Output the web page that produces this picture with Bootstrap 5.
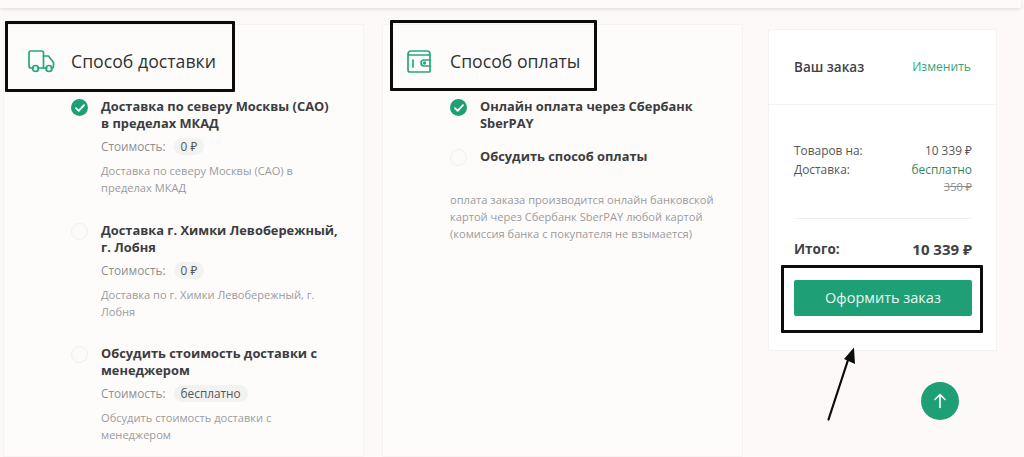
<!doctype html>
<html lang="ru"><head><meta charset="utf-8"><title>Оформление заказа</title>
<link href="https://cdn.jsdelivr.net/npm/bootstrap@5.3.0/dist/css/bootstrap.min.css" rel="stylesheet">
<style>
html,body{height:457px;overflow:hidden}
body{background:#fdf9f8;font-family:"Open Sans","Noto Sans",sans-serif;color:#3b3d40;position:relative}
.topstrip{height:8px;box-shadow:0 1px 4px rgba(0,0,0,.13);margin:0 3px 0 0;background:#fefafa}
.board{padding:16px 26px 0 3px;gap:18px}
.panel{width:361px;height:433px;background:#fefcfb;border:1px solid #f6f3f2;flex:none}
.panel-head{height:73px;padding-left:24px;gap:16px}
.panel-head.pay{padding-left:24px;gap:18px}
.panel-title{font-size:17.7px;font-weight:500;color:#303236;margin:0}
.choices{padding-left:67px;padding-right:24px}
.choice{gap:13px;margin-bottom:25px}
.choice.roomy{margin-bottom:26px}
.choice.tight{margin-bottom:16px}
.tick{width:17px;height:17px;border-radius:50%;flex:none;background:#1e9f76;display:flex;align-items:center;justify-content:center;margin-top:1px}
.tick.off{background:#fcfbfa;border:1px solid #f1efee}
.choice-name{font-size:12.85px;font-weight:700;line-height:17px;color:#3b3d40}
.cost{font-size:11.8px;color:#8d8f92;line-height:17px;margin-top:6px;gap:8px}
.pill{background:#f2f2f1;border-radius:9px;padding:0 7px;color:#55575a;line-height:17px}
.desc{font-size:11.1px;line-height:17px;color:#9a9b9d;margin-top:7px}
.paynote{font-size:11.1px;line-height:17px;color:#9a9b9d;margin:4px 0 0 0}
.summary{width:229px;height:322px;background:#fff;border:1px solid #f5f2f1;margin:5px 0 0 7px;flex:none}
.sum-head{height:75px;padding:1px 25px 0;border-bottom:1px solid #f5f2f1}
.sum-title{font-size:13.5px;font-weight:600;color:#3f4144}
.sum-edit{font-size:12.1px;color:#34a582;text-decoration:none}
.sum-body{padding:36px 24px 0 25px;font-size:11.9px;line-height:19px;color:#55575a}
.free{color:#2f8a5f}
.old{font-size:11px;line-height:15px;color:#8d8f92;text-decoration:line-through;text-align:right}
.rule{height:1px;background:#f0eeee;margin:24px 0 20px}
.total{font-size:15px;font-weight:700;line-height:20px;color:#3f4144}
.total span:first-child{font-size:13.500px}
.order-btn{display:block;width:100%;height:36px;margin-top:21px;background:#1e9f76;border:0;border-radius:2px;color:#eaf7f2;font-size:14.5px;padding:0}
.order-btn:hover{background:#1e9f76;color:#eaf7f2}
.callout{position:absolute;border:3px solid #0c0c0c;border-radius:1px;pointer-events:none}
.c1{left:5px;top:21px;width:230px;height:71px}
.c2{left:390px;top:20px;width:207px;height:71px}
.c3{left:781px;top:265px;width:202px;height:68px}
.arrow{position:absolute;left:820px;top:340px;pointer-events:none}
.to-top{position:absolute;left:921px;top:382px;width:38px;height:38px;border-radius:50%;background:#1e9f76;border:0;padding:0;display:flex;align-items:center;justify-content:center}
</style></head>
<body>
<div class="topstrip"></div>
<div class="board d-flex align-items-start">
  <section class="panel">
    <div class="panel-head d-flex align-items-center">
      <svg width="27" height="23" viewBox="0 0 27 23" fill="none" stroke="#27a67e" stroke-width="1.7" stroke-linecap="round" stroke-linejoin="round"><path d="M5.5 18H3A2 2 0 0 1 1 16V3A2 2 0 0 1 3 1H13.5A2 2 0 0 1 15.5 3V18H9.5"/><path d="M15.5 6H20.500L25.500 12.500V16.500A1.500 1.500 0 0 1 24 18H23M19 18H15.500"/><circle cx="7.5" cy="18.500" r="3"/><circle cx="21" cy="18.500" r="3"/></svg>
      <h2 class="panel-title">Способ доставки</h2>
    </div>
    <div class="choices">
      <div class="choice roomy d-flex">
        <span class="tick"><svg width="10" height="8" viewBox="0 0 10 8" fill="none" stroke="#fff" stroke-width="1.8" stroke-linecap="round" stroke-linejoin="round"><path d="M1 4.200 3.700 6.800 9 1.200"/></svg></span>
        <div><div class="choice-name">Доставка по северу Москвы (САО) в пределах МКАД</div>
        <div class="cost d-flex"><span>Стоимость:</span><span class="pill">0 ₽</span></div>
        <div class="desc">Доставка по северу Москвы (САО) в пределах МКАД</div></div>
      </div>
      <div class="choice d-flex">
        <span class="tick off"></span>
        <div><div class="choice-name">Доставка г. Химки Левобережный, г. Лобня</div>
        <div class="cost d-flex"><span>Стоимость:</span><span class="pill">0 ₽</span></div>
        <div class="desc">Доставка по г. Химки Левобережный, г. Лобня</div></div>
      </div>
      <div class="choice d-flex">
        <span class="tick off"></span>
        <div><div class="choice-name">Обсудить стоимость доставки с менеджером</div>
        <div class="cost d-flex"><span>Стоимость:</span><span class="pill">бесплатно</span></div>
        <div class="desc">Обсудить стоимость доставки с менеджером</div></div>
      </div>
    </div>
  </section>
  <section class="panel">
    <div class="panel-head pay d-flex align-items-center">
      <svg width="25" height="23" viewBox="0 0 25 23" fill="none" stroke="#27a67e" stroke-width="1.7" stroke-linecap="round" stroke-linejoin="round"><path d="M1 4A3 3 0 0 1 4 1H20A3 3 0 0 1 23 4V5H3A2 2 0 0 1 1 3.500V20A2 2 0 0 0 3 22H22A1 1 0 0 0 23 21V5"/><path d="M6 10V17"/><path d="M23.500 10H17A3 3 0 0 0 17 16H23.500"/><circle cx="17.500" cy="13" r=".8"/></svg>
      <h2 class="panel-title">Способ оплаты</h2>
    </div>
    <div class="choices">
      <div class="choice tight d-flex">
        <span class="tick"><svg width="10" height="8" viewBox="0 0 10 8" fill="none" stroke="#fff" stroke-width="1.8" stroke-linecap="round" stroke-linejoin="round"><path d="M1 4.200 3.700 6.800 9 1.200"/></svg></span>
        <div class="choice-name">Онлайн оплата через Сбербанк SberPAY</div>
      </div>
      <div class="choice d-flex">
        <span class="tick off"></span>
        <div class="choice-name">Обсудить способ оплаты</div>
      </div>
      <p class="paynote">оплата заказа производится онлайн банковской картой через Сбербанк SberPAY любой картой (комиссия банка с покупателя не взымается)</p>
    </div>
  </section>
  <aside class="summary">
    <div class="sum-head d-flex align-items-center justify-content-between">
      <span class="sum-title">Ваш заказ</span><a class="sum-edit" href="#">Изменить</a>
    </div>
    <div class="sum-body">
      <div class="d-flex justify-content-between"><span>Товаров на:</span><span>10 339 ₽</span></div>
      <div class="d-flex justify-content-between"><span>Доставка:</span><span class="free">бесплатно</span></div>
      <div class="old">350 ₽</div>
      <div class="rule"></div>
      <div class="total d-flex justify-content-between"><span>Итого:</span><span>10 339 ₽</span></div>
      <button class="btn order-btn" type="button">Оформить заказ</button>
    </div>
  </aside>
</div>
<div class="callout c1"></div><div class="callout c2"></div><div class="callout c3"></div>
<svg class="arrow" width="40" height="84" viewBox="0 0 40 84"><path d="M8.500 79.500 28 20" stroke="#0c0c0c" stroke-width="2.200" stroke-linecap="round"/><path d="M34 7.500 35 24 24 19Z" fill="#0c0c0c"/></svg>
<button class="to-top" type="button" aria-label="Наверх"><svg width="14" height="16" viewBox="0 0 14 16" fill="none" stroke="#fff" stroke-width="1.6" stroke-linecap="round" stroke-linejoin="round"><path d="M7 14.500V1.500M2 6.500 7 1.500 12 6.500"/></svg></button>
</body></html>
